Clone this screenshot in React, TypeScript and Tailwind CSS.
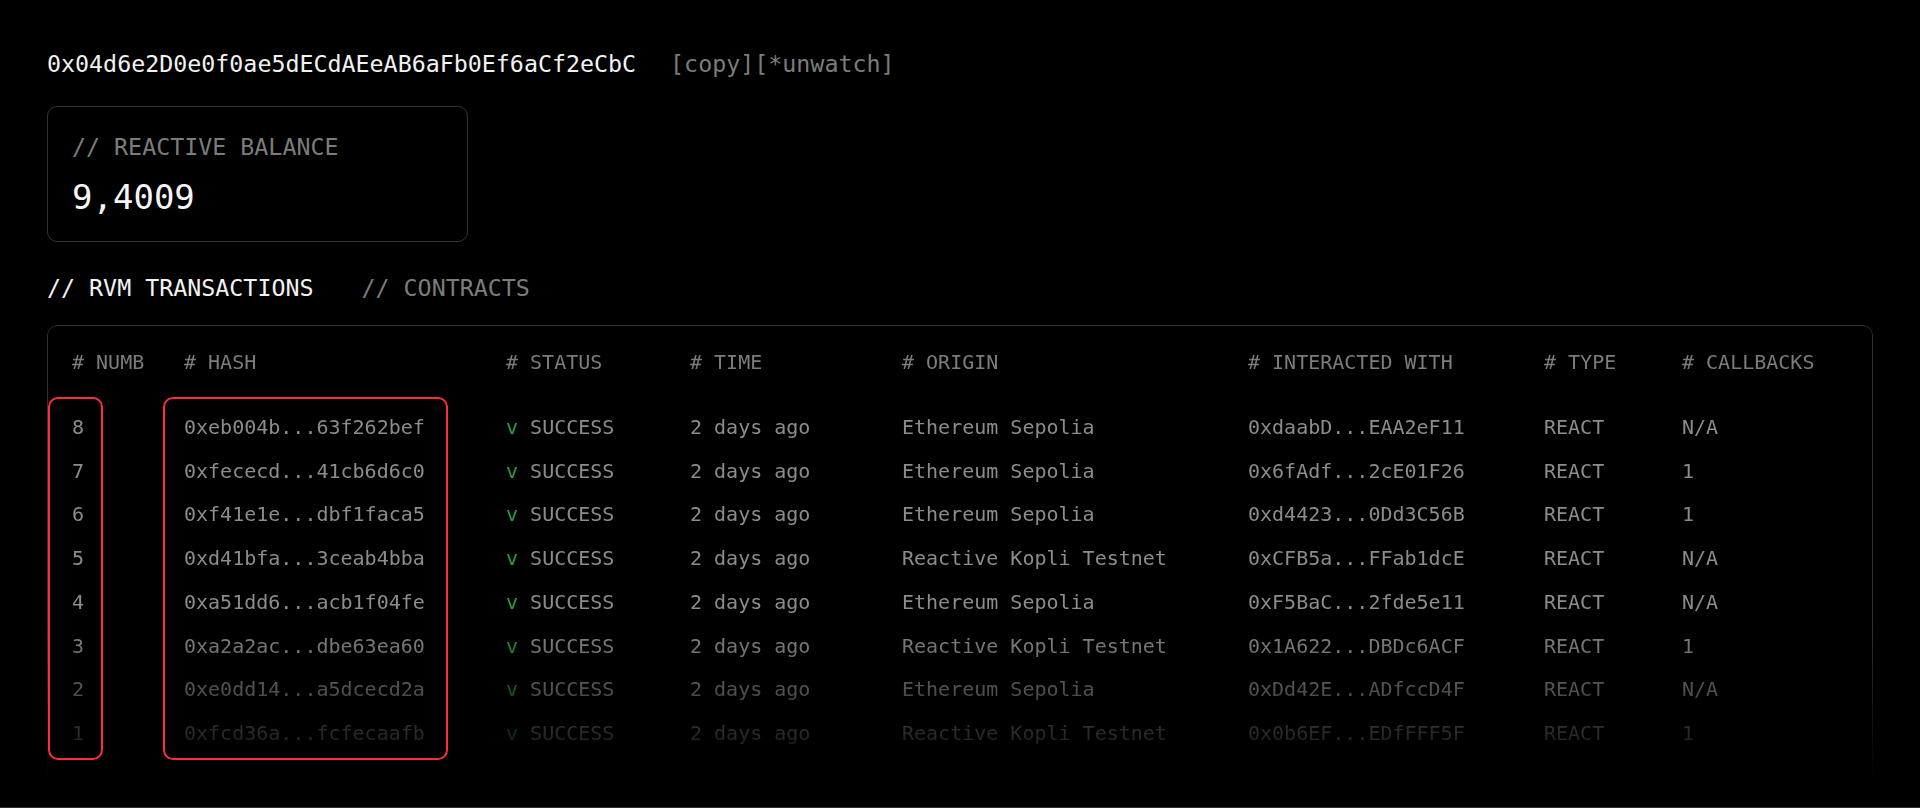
import React from 'react'

const MONO = "font-['DejaVu_Sans_Mono','Liberation_Mono',monospace]"

interface Tx {
  numb: number
  hash: string
  origin: string
  target: string
  callbacks: string
}

const TXS: Tx[] = [
  { numb: 8, hash: '0xeb004b...63f262bef', origin: 'Ethereum Sepolia', target: '0xdaabD...EAA2eF11', callbacks: 'N/A' },
  { numb: 7, hash: '0xfececd...41cb6d6c0', origin: 'Ethereum Sepolia', target: '0x6fAdf...2cE01F26', callbacks: '1' },
  { numb: 6, hash: '0xf41e1e...dbf1faca5', origin: 'Ethereum Sepolia', target: '0xd4423...0Dd3C56B', callbacks: '1' },
  { numb: 5, hash: '0xd41bfa...3ceab4bba', origin: 'Reactive Kopli Testnet', target: '0xCFB5a...FFab1dcE', callbacks: 'N/A' },
  { numb: 4, hash: '0xa51dd6...acb1f04fe', origin: 'Ethereum Sepolia', target: '0xF5BaC...2fde5e11', callbacks: 'N/A' },
  { numb: 3, hash: '0xa2a2ac...dbe63ea60', origin: 'Reactive Kopli Testnet', target: '0x1A622...DBDc6ACF', callbacks: '1' },
  { numb: 2, hash: '0xe0dd14...a5dcecd2a', origin: 'Ethereum Sepolia', target: '0xDd42E...ADfccD4F', callbacks: 'N/A' },
  { numb: 1, hash: '0xfcd36a...fcfecaafb', origin: 'Reactive Kopli Testnet', target: '0x0b6EF...EDfFFF5F', callbacks: '1' },
]

const COLS = 'grid grid-cols-[112px_322px_184px_212px_346px_296px_138px_1fr]'

export default function App() {
  return (
    <div className={`h-screen flex flex-col bg-black ${MONO}`}>
      <main className="flex-1 overflow-hidden px-[47px] pt-[48px]">
        {/* Address */}
        <div className="flex items-center gap-[34px] text-[23.3px] leading-[32px]">
          <span className="text-[#f2f2f2]">0x04d6e2D0e0f0ae5dECdAEeAB6aFb0Ef6aCf2eCbC</span>
          <span className="text-[#7c7c7c]">
            <button className="hover:text-white">[copy]</button>
            <button className="hover:text-white">[*unwatch]</button>
          </span>
        </div>

        {/* Balance */}
        <div className="mt-[26px] w-[421px] rounded-[10px] border border-[#333] px-6 pt-6 pb-6">
          <p className="text-[23.3px] leading-[32px] text-[#7c7c7c]">// REACTIVE BALANCE</p>
          <p className="mt-[14px] text-[34px] leading-[40px] text-[#f5f5f5]">9,4009</p>
        </div>

        {/* Tabs */}
        <div className="mt-[30px] flex gap-12 text-[23.3px] leading-[32px]">
          <button className="text-[#f2f2f2]">// RVM TRANSACTIONS</button>
          <button className="text-[#7c7c7c]">// CONTRACTS</button>
        </div>

        {/* Transactions */}
        <div className="relative mt-[21px]">
          <div className="h-[455px] rounded-t-[10px] border border-[#333] px-6 pt-[14px] [mask-image:linear-gradient(to_bottom,black_65%,transparent_100%)]">
            <div className={`${COLS} h-11 items-center text-[20px] text-[#7c7c7c]`}>
              <span># NUMB</span>
              <span># HASH</span>
              <span># STATUS</span>
              <span># TIME</span>
              <span># ORIGIN</span>
              <span># INTERACTED WITH</span>
              <span># TYPE</span>
              <span># CALLBACKS</span>
            </div>
            <div className="mt-[21px]">
              {TXS.map(tx => (
                <div key={tx.numb} className={`${COLS} h-[43.75px] items-center text-[20px] text-[#8c8c8c]`}>
                  <span>{tx.numb}</span>
                  <span>{tx.hash}</span>
                  <span>
                    <span className="text-[#22a03c]">v</span> SUCCESS
                  </span>
                  <span>2 days ago</span>
                  <span>{tx.origin}</span>
                  <span>{tx.target}</span>
                  <span>REACT</span>
                  <span>{tx.callbacks}</span>
                </div>
              ))}
            </div>
          </div>

          {/* annotation outlines */}
          <div className="absolute left-[1px] top-[72px] h-[363px] w-[55px] rounded-[10px] border-2 border-[#ff2d3d]" />
          <div className="absolute left-[116px] top-[72px] h-[363px] w-[285px] rounded-[10px] border-2 border-[#ff2d3d]" />
        </div>
      </main>
      <div className="h-px bg-[#333]" />
    </div>
  )
}
